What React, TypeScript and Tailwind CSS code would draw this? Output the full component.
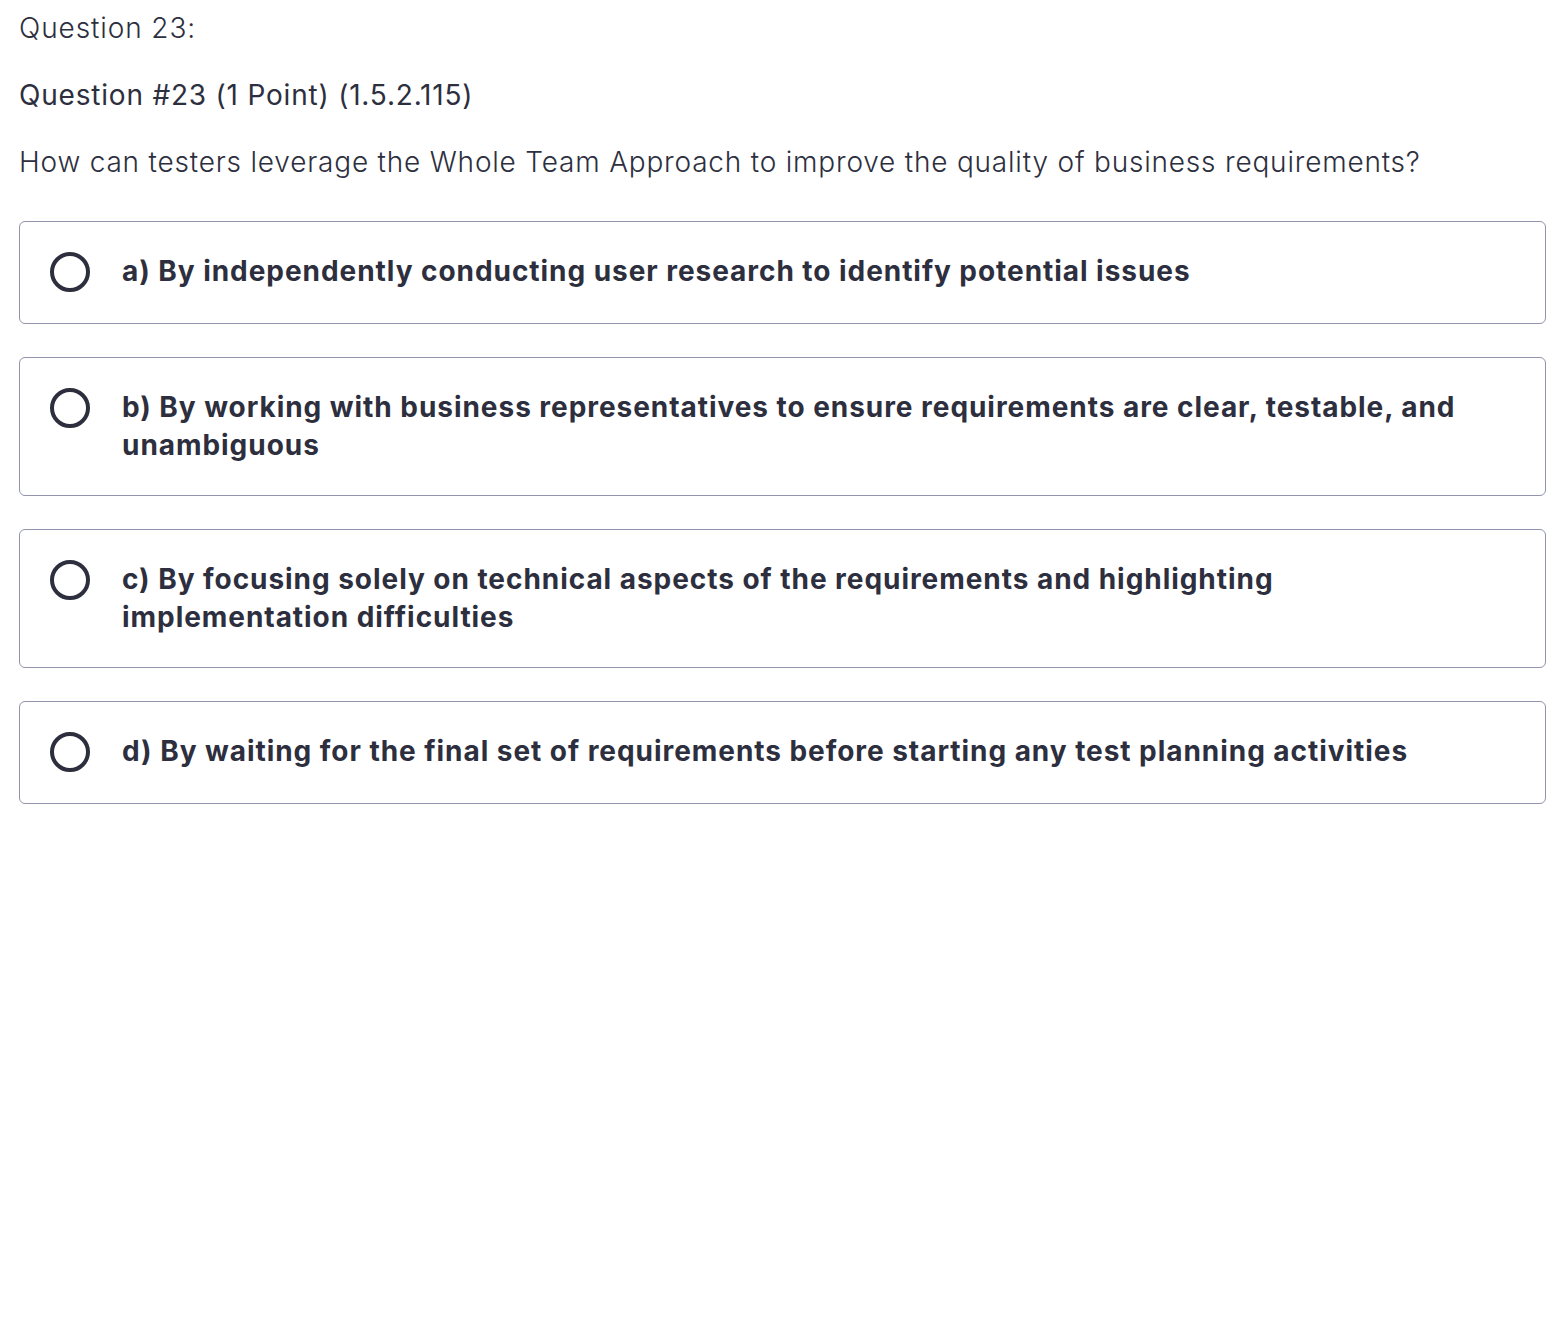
const options = [
  "a) By independently conducting user research to identify potential issues",
  "b) By working with business representatives to ensure requirements are clear, testable, and unambiguous",
  "c) By focusing solely on technical aspects of the requirements and highlighting implementation difficulties",
  "d) By waiting for the final set of requirements before starting any test planning activities",
];

const Radio = () => (
  <span className="shrink-0 w-10 h-10 rounded-full border-4 border-[#2d2f3e] bg-white" />
);

export default function App() {
  return (
    <div className="min-h-screen bg-white text-[#2d2f3e] font-['Inter','Liberation_Sans',sans-serif] px-[19px] pt-2">
      <div className="text-[28px] leading-[40px] font-light tracking-[0.9px]">Question 23:</div>
      <div className="mt-[27px] text-[28px] leading-[40px] font-normal tracking-[0.8px]">
        Question #23 (1 Point) (1.5.2.115)
      </div>
      <p className="mt-[27px] text-[28px] leading-[40px] font-light tracking-[0.8px]">
        How can testers leverage the Whole Team Approach to improve the quality of business requirements?
      </p>

      <div className="mt-[39px] mr-px flex flex-col gap-[33px]">
        {options.map((opt) => (
          <label
            key={opt}
            className="flex items-start gap-8 rounded-md border border-[#9194ac] px-[30px] pt-[30px] pb-[31px] cursor-pointer"
          >
            <Radio />
            <span className="text-[28px] leading-[38px] font-bold tracking-[0.95px] pr-10">{opt}</span>
          </label>
        ))}
      </div>
    </div>
  );
}
